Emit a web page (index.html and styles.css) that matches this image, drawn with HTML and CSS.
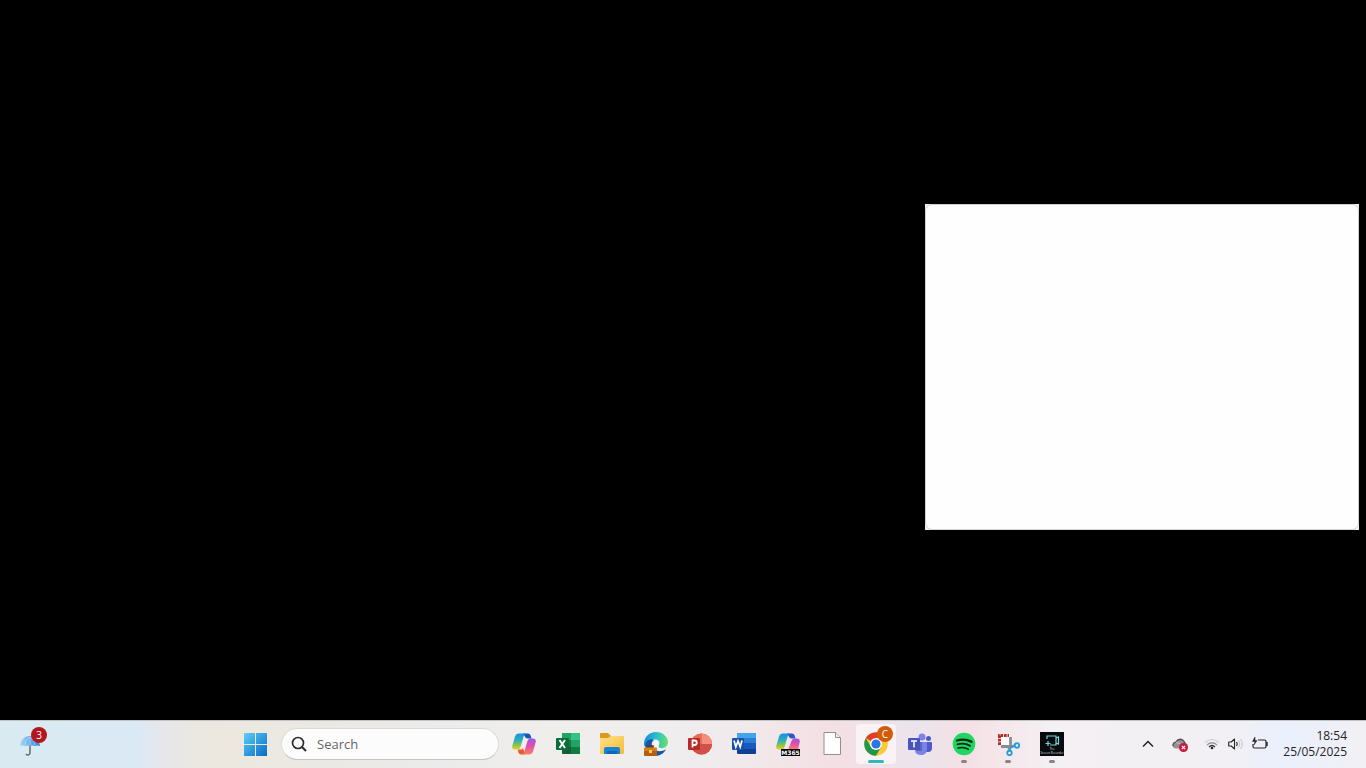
FILE: index.html
```html
<!DOCTYPE html>
<html lang="en-GB">
<head>
<meta charset="utf-8">
<meta name="viewport" content="width=device-width, initial-scale=1">
<title>Desktop</title>
<link rel="stylesheet" href="styles.css">
</head>
<body>
<main class="desktop">
  <section class="window" aria-label="Blank window"><div class="window-page"></div></section>
</main>

<footer class="taskbar">
  <button class="widgets" type="button" aria-label="Weather, 3 notifications">
    <span class="widget-icon">
      <svg class="icon" viewBox="0 0 24 24" aria-hidden="true">
        <defs><linearGradient id="umb"><stop offset="0" stop-color="#a9d6f7"/><stop offset="1" stop-color="#2b84da"/></linearGradient></defs>
        <path d="M12 11v10a2.200 2.200 0 0 1-4 1" fill="none" stroke="#6c7478" stroke-width="1.600"/>
        <path d="M2 14C3 7 7 4 12 4s9 3 10 10q-2.500-1-5 0-2.500-1-5 0-2.500-1-5 0-2.500-1-5 0z" fill="url(#umb)"/>
        <path d="M7 13q0-5 5-8M12 13V5M17 13q0-5-5-8" fill="none" stroke="#d5edfc" stroke-width=".5"/>
      </svg>
      <span class="count">3</span>
    </span>
  </button>

  <nav class="apps" aria-label="Apps">
    <button class="app" type="button" aria-label="Start">
      <svg class="icon" viewBox="0 0 24 24" aria-hidden="true">
        <defs><linearGradient id="win" x1="0" y1="0" x2="24" y2="24" gradientUnits="userSpaceOnUse"><stop offset="0" stop-color="#5ed1f8"/><stop offset="1" stop-color="#0669c3"/></linearGradient></defs>
        <path d="M0 1h11v11H0zM12 1h11v11H12zM0 13h11v11H0zM12 13h11v11H12z" fill="url(#win)"/>
      </svg>
    </button>

    <label class="search">
      <svg class="search-icon" viewBox="0 0 16 16" aria-hidden="true"><circle cx="7" cy="7" r="5.500" fill="none" stroke="#2b2b2b" stroke-width="1.700"/><path d="M11 11l4 4" stroke="#2b2b2b" stroke-width="2"/></svg>
      <input class="search-input" type="text" placeholder="Search" aria-label="Search">
    </label>

    <button class="app" type="button" aria-label="Copilot">
      <svg class="icon" viewBox="0 0 24 24" aria-hidden="true">
        <defs>
          <linearGradient id="cpl" x1="0" y1="0" x2="0" y2="1"><stop offset="0" stop-color="#1a8fe3"/><stop offset=".4" stop-color="#28aebe"/><stop offset=".75" stop-color="#8bc848"/><stop offset="1" stop-color="#f5cb1c"/></linearGradient>
          <linearGradient id="cpr" x1="0" y1="0" x2="0" y2="1"><stop offset="0" stop-color="#9c55ea"/><stop offset=".5" stop-color="#e64fa9"/><stop offset="1" stop-color="#fb8262"/></linearGradient>
        </defs>
        <path d="M11 1.500h5q2 0 2.600 2l.9 3h-4q-2 0-2.600-2z" fill="#1857b9"/>
        <path d="M5.500 17.500H9q1.500 0 2-1.500l2 6.500H9q-2 0-2.500-2z" fill="#ed5b32"/>
        <path d="M7 1.500h6.500q-1.200.5-1.700 2.500L8.500 15q-.7 2.500-3 2.500H3q-3.500 0-2.600-4L3 4.500q1-3 4-3z" fill="url(#cpl)"/>
        <path d="M17 22.500h-6.500q1.200-.5 1.700-2.500L15.500 9q.7-2.500 3-2.500H21q3.500 0 2.600 4L21 19.500q-1 3-4 3z" fill="url(#cpr)"/>
      </svg>
    </button>

    <button class="app" type="button" aria-label="Excel">
      <svg class="icon" viewBox="0 0 24 24" aria-hidden="true">
        <rect x="6" y="1" width="18" height="21" rx="1" fill="#185c37"/><path d="M6 2q0-1 1-1h8v7H6z" fill="#21a366"/><path d="M15 1h8q1 0 1 1v6h-9z" fill="#33c481"/><path d="M15 8h9v7h-9z" fill="#21a366"/><path d="M6 8h9v7H6z" fill="#107c41"/><path d="M15 15h9v6q0 1-1 1h-8z" fill="#107c41"/>
        <rect y="6" width="13" height="12" rx="1" fill="#0c6b38"/><path d="M3.500 8l5.500 8M9 8l-5.500 8" stroke="#fff" stroke-width="2"/>
      </svg>
    </button>

    <button class="app" type="button" aria-label="File Explorer">
      <svg class="icon" viewBox="0 0 24 24" aria-hidden="true">
        <defs><linearGradient id="fold" x2="1" y2="1"><stop stop-color="#ffe08b"/><stop offset="1" stop-color="#f5bd35"/></linearGradient></defs>
        <path d="M0 2q0-1 1-1h7l3 3h12q1 0 1 1v5H0z" fill="#d99b19"/><path d="M0 6h8l3-2h12q1 0 1 1v16q0 1-1 1H1q-1 0-1-1z" fill="url(#fold)"/><path d="M4 22v-5q0-2 2-2h12q2 0 2 2v5z" fill="#1683d5"/><path d="M7 19h10v3H7z" fill="#1267b5"/>
      </svg>
    </button>

    <button class="app" type="button" aria-label="Edge">
      <svg class="icon" viewBox="0 0 24 24" aria-hidden="true">
        <defs><linearGradient id="edge" x1="0" y1=".4" x2="1" y2=".5"><stop stop-color="#168be0"/><stop offset=".55" stop-color="#2dc3c9"/><stop offset="1" stop-color="#6be265"/></linearGradient></defs>
        <path d="M0 12C0 5 5 0 12 0s12 5 12 10-5 7-8 6c-2-.6-2-2-1-3 2-5-4-7-8-4-3 2-4 5-3 8Q0 15 0 12z" fill="url(#edge)"/>
        <path d="M1 13C2 8 6 6 10 8c-3 2-3 6 0 9 3 3 8 2.500 12 .5-4 7-12 8-17 4z" fill="#125aa9"/>
        <path d="M11 9c4-1 5 2 3.500 5-1 2 3 4 7 2-3 3-8 2-10-2-1-2-1.500-4-.5-5z" fill="#f5fafc"/>
        <path d="M4 16v-2h5v2" fill="none" stroke="#6d3514" stroke-width="1.500"/><rect y="15.500" width="13" height="8" rx="1" fill="#d77c19"/><path d="M0 19h13v4q0 1-1 1H1q-1 0-1-1z" fill="#b55d14"/><path d="M5 18h3v3H5z" fill="#ffd05c"/>
      </svg>
    </button>

    <button class="app" type="button" aria-label="PowerPoint">
      <svg class="icon" viewBox="0 0 24 24" aria-hidden="true">
        <circle cx="13.500" cy="12" r="10.500" fill="#d35230"/><path d="M13.500 1.500A10.500 10.500 0 0 1 24 12H13.500z" fill="#f58e7c"/><path d="M13.500 1.500A10.500 10.500 0 0 0 3 12h10.500z" fill="#e96b59"/><path d="M3 12h21a10.500 10.500 0 0 1-21 0z" fill="#d0504a"/>
        <rect y="6" width="12" height="12" rx="1" fill="#b72c25"/><path d="M4.500 15.500v-7h2q2.300 0 2.300 2.200T6.500 13h-2" fill="none" stroke="#fff" stroke-width="1.800"/>
      </svg>
    </button>

    <button class="app" type="button" aria-label="Word">
      <svg class="icon" viewBox="0 0 24 24" aria-hidden="true">
        <rect x="5" y="1" width="19" height="21" rx="1" fill="#103f91"/><path d="M5 2q0-1 1-1h17q1 0 1 1v4H5z" fill="#41a5ee"/><path d="M5 6h19v5.500H5z" fill="#2b7cd3"/><path d="M5 11.500h19V17H5z" fill="#185abd"/>
        <rect y="6" width="12" height="12" rx="1" fill="#1650a8"/><path d="M2 8.500L3.800 15 6 9l2.200 6L10 8.500" fill="none" stroke="#fff" stroke-width="1.700"/>
      </svg>
    </button>

    <button class="app" type="button" aria-label="Microsoft 365 Copilot">
      <svg class="icon" viewBox="0 0 24 24" aria-hidden="true">
        <path d="M11 1.500h5q2 0 2.600 2l.9 3h-4q-2 0-2.600-2z" fill="#3257c5"/>
        <path d="M7 1.500h6.500q-1.200.5-1.700 2.500L8.500 15q-.7 2.500-3 2.500H3q-3.500 0-2.600-4L3 4.500q1-3 4-3z" fill="url(#cpl)"/>
        <path d="M12 18L15.500 9q.7-2.500 3-2.500H21q3.500 0 2.600 4L22 18z" fill="url(#cpr)"/>
        <path d="M5 17h19v7H5z" fill="#050505"/><text class="m365" x="14.500" y="23" text-anchor="middle">M365</text>
      </svg>
    </button>

    <button class="app" type="button" aria-label="Document">
      <svg class="icon" viewBox="0 0 24 24" aria-hidden="true"><path d="M4 .5h11.500l5 5V22.500H4z" fill="#fff" stroke="#998c90"/><path d="M15.500.5v5h5" fill="#eee" stroke="#998c90"/></svg>
    </button>

    <button class="app app-active" type="button" aria-label="Chrome">
      <svg class="icon" viewBox="0 0 24 24" aria-hidden="true">
        <circle cx="12" cy="12" r="11.800" fill="#fcc934"/><path d="M12 12L1.800 6.100A11.800 11.800 0 0 1 22.200 6.100H12z" fill="#e33b2e"/><path d="M1.800 6.100A11.800 11.800 0 0 0 12 23.800L17.100 15 12 12 6.900 15z" fill="#21964a"/><circle cx="12" cy="12" r="6" fill="#fff"/><circle cx="12" cy="12" r="4.600" fill="#2777e8"/>
      </svg>
      <span class="profile">C</span>
    </button>

    <button class="app" type="button" aria-label="Teams">
      <svg class="icon" viewBox="0 0 24 24" aria-hidden="true">
        <circle cx="20.500" cy="6.500" r="2.500" fill="#5059c9"/><path d="M17 10h6q1 0 1 1v5q0 4-4 4h-3z" fill="#5059c9"/><circle cx="14" cy="5" r="3.500" fill="#7b83eb"/><path d="M7 10h11q1 0 1 1v6q0 6-6 6t-6-5z" fill="#7b83eb"/><path d="M8 10h6v9H8z" fill="#5c64bd"/>
        <rect y="6" width="12" height="12" rx="1" fill="#4b53bc"/><path d="M3 9h6M6 9v6.500" stroke="#fff" stroke-width="1.500"/>
      </svg>
    </button>

    <button class="app app-open" type="button" aria-label="Spotify">
      <svg class="icon" viewBox="0 0 24 24" aria-hidden="true"><circle cx="12" cy="12" r="11.300" fill="#1ed760"/><path d="M5 8.500q8-2.200 14.500 1.300" stroke-width="2.300" fill="none" stroke="#15231a" stroke-linecap="round"/><path d="M5.500 12.300q7-1.800 12.500 1.400" stroke-width="1.900" fill="none" stroke="#15231a" stroke-linecap="round"/><path d="M6 16q6-1.500 10.500 1.300" stroke-width="1.500" fill="none" stroke="#15231a" stroke-linecap="round"/></svg>
    </button>

    <button class="app app-open" type="button" aria-label="Snipping Tool">
      <svg class="icon" viewBox="0 0 24 24" aria-hidden="true">
        <path d="M2 2h12v11H2z" fill="#fff"/><path d="M3.500 13V3.500H13" fill="none" stroke="#b62c27" stroke-width="3" stroke-dasharray="2.700 .8"/><path d="M14.500 5v10l-2 3M5 14.500h11l3-1" fill="none" stroke="#858e96" stroke-width="2.800"/><circle cx="21" cy="13.500" r="2.200" fill="#fff" stroke="#249ed5" stroke-width="1.900"/><circle cx="13.500" cy="21" r="2.200" fill="#fff" stroke="#249ed5" stroke-width="1.900"/><path d="M13.500 19l1.500-4 4-1" stroke="#249ed5" stroke-width="1.500" fill="none"/>
      </svg>
    </button>

    <button class="app app-open" type="button" aria-label="Screen Recorder">
      <svg class="icon" viewBox="0 0 24 24" aria-hidden="true"><path d="M0 0h24v24H0z" fill="#080b0e"/><path d="M7 7V4h9v9h-6M16 6l2.500-1v7L16 11M8 9v5M5.500 11.500h5" fill="none" stroke="#79d5d5" stroke-width="1.200"/><text class="recorder" x="12" y="18" text-anchor="middle">The</text><text class="recorder" x="12" y="22" text-anchor="middle">Screen Recorder</text></svg>
    </button>
  </nav>

  <div class="tray">
    <button class="tray-button" type="button" aria-label="Show hidden icons"><svg class="tray-icon" viewBox="0 0 16 16" aria-hidden="true"><path d="M3 10.500l5-5 5 5" fill="none" stroke="#242424" stroke-width="1.500"/></svg></button>
    <button class="tray-button" type="button" aria-label="OneDrive, sync error">
      <svg class="tray-icon" viewBox="0 0 16 16" aria-hidden="true"><path d="M3.500 12.500Q.5 12 .5 9t3-3.200Q5 2.500 8.500 2.500t4.500 4q2.500.5 2.500 3.500t-3 2.500z" fill="#949294"/><path d="M1 10q0-3.500 3-4 2-3 5-2.500 3 .5 4 4" fill="none" stroke="#4c494c" stroke-width="1.200"/><path d="M4 6l8 4" stroke="#c8c5c8"/><circle cx="11.500" cy="11.500" r="4.500" fill="#c9183b"/><path d="M9.800 9.800l3.400 3.400M13.200 9.800l-3.400 3.400" stroke="#fff" stroke-width="1.200"/></svg>
    </button>
    <button class="status" type="button" aria-label="Network, volume and battery">
      <svg class="tray-icon" viewBox="0 0 16 16" aria-hidden="true"><path d="M1 6.500q7-6 14 0" fill="none" stroke="#d0cdd2" stroke-width="1.200"/><path d="M3 9q5-4.500 10 0" fill="none" stroke="#98969b" stroke-width="1.200"/><path d="M5 11q3-3 6 0" fill="none" stroke="#2c2b2d" stroke-width="1.200"/><circle cx="8" cy="12" r="1.300" fill="#222"/></svg>
      <svg class="tray-icon" viewBox="0 0 16 16" aria-hidden="true"><path d="M.7 6h2.500l3.300-3v10l-3.300-3H.7z" fill="none" stroke="#252527" stroke-width="1.100" stroke-linejoin="round"/><path d="M8.500 6q1.500 2 0 4" fill="none" stroke="#252527" stroke-width="1.200"/><path d="M10.500 4.500q2.500 3.500 0 7M12.500 3q3.500 5 0 10" fill="none" stroke="#c2bfc5"/></svg>
      <svg class="tray-icon" viewBox="0 0 16 16" aria-hidden="true"><path d="M6 4h6.500Q14 4 14 5.500v5q0 1.500-1.500 1.500h-10Q1 12 1 10.500V8" fill="none" stroke="#222" stroke-width="1.200"/><path d="M15 6v4" stroke="#222" stroke-width="1.400"/><path d="M3 1L.5 5.500H3L2 9l3-4.500H3z" fill="#222" stroke="#222" stroke-width=".5"/></svg>
    </button>
    <button class="clock" type="button"><time datetime="2025-05-25T18:54"><span class="clock-line">18:54</span><span class="clock-line">25/05/2025</span></time></button>
  </div>
</footer>
</body>
</html>
```
FILE: styles.css
```css
* { box-sizing: border-box; }

body {
  margin: 0;
  min-height: 100vh;
  display: flex;
  flex-direction: column;
  background: #000;
  font-family: "Open Sans", "Noto Sans", sans-serif;
  color: #242426;
}

button, input { font: inherit; color: inherit; }

button {
  border: 0;
  padding: 0;
  background: transparent;
}

svg { display: block; }

.desktop {
  position: relative;
  flex: 1;
}

/* Free-floating window on the desktop */
.window {
  position: absolute;
  top: 204px;
  right: 7px;
  width: 434px;
  height: 326px;
  background: #f1f1f1;
}

.window-page {
  height: 100%;
  border: 1px solid #d2d2d2;
  border-radius: 7px;
  background: #fefefe;
}

.taskbar {
  height: 48px;
  padding: 0 11px 0 8px;
  display: flex;
  align-items: center;
  box-shadow: inset 0 1px #c3c3c5;
  background: linear-gradient(90deg, #d9ebf1 0%, #dbe9f5 10%, #e7e7ea 12%, #ece8df 15%, #ebe9e3 23%, #ebebeb 32%, #efeeeb 40%, #efeeee 48%, #f1e9eb 55%, #f4dfe3 61%, #ebe4ed 67%, #f5e1e5 71%, #f4f0f3 77%, #f2f0f4 90%, #eaf0fd 94%, #f2f0f4 100%);
}

.widgets {
  width: 168px;
  height: 100%;
  padding-left: 10px;
}

.widget-icon {
  position: relative;
  display: block;
  width: 24px;
}

.icon { width: 24px; height: 24px; }

.count, .profile {
  position: absolute;
  width: 16px;
  height: 16px;
  border-radius: 50%;
  color: #fff;
  font-size: 10px;
  line-height: 16px;
  text-align: center;
}

.count {
  top: -5px;
  right: -5px;
  background: #b3161f;
}

.profile {
  top: 2px;
  right: 3px;
  background: #d35c0c;
}

.apps {
  margin: 0 auto;
  display: flex;
  align-items: center;
  gap: 4px;
}

.app {
  position: relative;
  width: 40px;
  height: 40px;
  display: grid;
  place-items: center;
  border-radius: 4px;
}

.app-active { background: #faf3f6; }

.app-active::after, .app-open::after {
  content: "";
  position: absolute;
  bottom: 1px;
  left: 50%;
  width: 6px;
  height: 3px;
  border-radius: 2px;
  background: #89848a;
  transform: translateX(-50%);
}

.app-active::after {
  width: 16px;
  background: #2cb9bf;
}

.search {
  width: 218px;
  height: 32px;
  margin: 0 1px;
  padding: 0 9px;
  display: flex;
  align-items: center;
  gap: 10px;
  border: 1px solid #dddbd8;
  border-bottom-color: #c5c4c2;
  border-radius: 16px;
  background: #fdfcfd;
}

.search-icon {
  flex: none;
  width: 16px;
  height: 16px;
}

.search-input {
  flex: 1;
  min-width: 0;
  padding: 0;
  border: 0;
  outline: 0;
  background: transparent;
  font-size: 13px;
}

.search-input::placeholder { color: #656466; opacity: 1; }

.m365 {
  font: bold 6px "DejaVu Sans", sans-serif;
  fill: #fff;
}

.recorder {
  font: 3px "Open Sans", sans-serif;
  fill: #d9d9d9;
}

.tray {
  display: flex;
  align-items: center;
}

.tray-button {
  width: 32px;
  height: 40px;
  display: grid;
  place-items: center;
}

.tray-icon { width: 16px; height: 16px; }

.status {
  height: 40px;
  padding: 0 8px;
  display: flex;
  align-items: center;
  gap: 8px;
}

.clock {
  width: 79px;
  height: 40px;
  padding-right: 8px;
  text-align: right;
  font-size: 12px;
  line-height: 16px;
}

.clock-line { display: block; }
```
